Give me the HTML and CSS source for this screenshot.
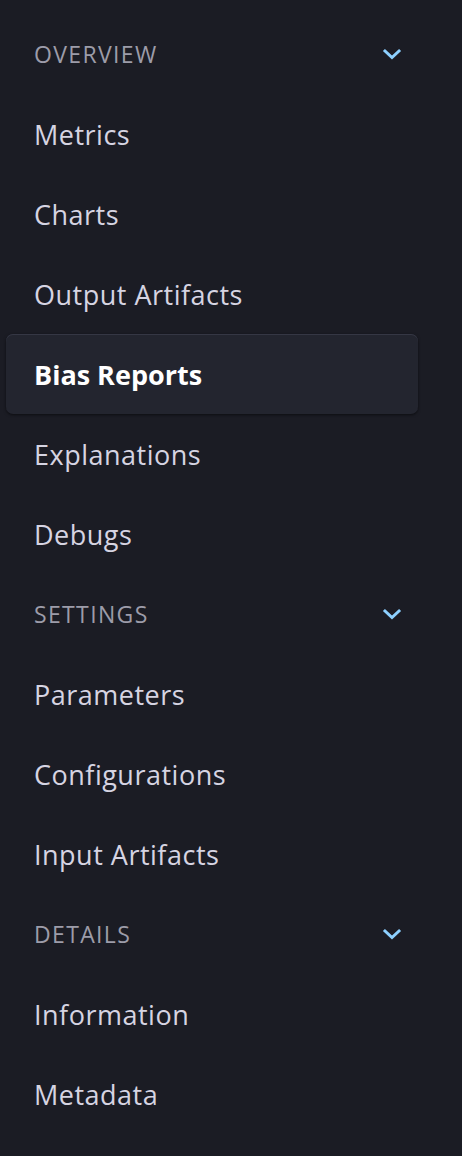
FILE: index.html
```html
<!DOCTYPE html>
<html>
<head>
<meta charset="utf-8">
<link rel="stylesheet" href="styles.css">
</head>
<body>
<nav class="side">
  <div class="section">
    <div class="head"><span>OVERVIEW</span><svg class="chev" width="20" height="12" viewBox="0 0 20 12"><path d="M3 3 L10 9.5 L17 3" fill="none" stroke="#8dd0ff" stroke-width="3" stroke-linecap="square"/></svg></div>
    <a class="item">Metrics</a>
    <a class="item">Charts</a>
    <a class="item">Output Artifacts</a>
    <a class="item active">Bias Reports</a>
    <a class="item">Explanations</a>
    <a class="item">Debugs</a>
  </div>
  <div class="section">
    <div class="head"><span>SETTINGS</span><svg class="chev" width="20" height="12" viewBox="0 0 20 12"><path d="M3 3 L10 9.5 L17 3" fill="none" stroke="#8dd0ff" stroke-width="3" stroke-linecap="square"/></svg></div>
    <a class="item">Parameters</a>
    <a class="item">Configurations</a>
    <a class="item">Input Artifacts</a>
  </div>
  <div class="section">
    <div class="head"><span>DETAILS</span><svg class="chev" width="20" height="12" viewBox="0 0 20 12"><path d="M3 3 L10 9.5 L17 3" fill="none" stroke="#8dd0ff" stroke-width="3" stroke-linecap="square"/></svg></div>
    <a class="item">Information</a>
    <a class="item">Metadata</a>
  </div>
</nav>
</body>
</html>
```

FILE: styles.css
```css
html, body {
  margin: 0;
  padding: 0;
  background: #1b1c24;
}
body {
  font-family: "Open Sans", "Noto Sans", sans-serif;
  height: 1156px;
  overflow: hidden;
}
.side {
  padding: 14px 0 0 6px;
  width: 412px;
}
.head {
  height: 80px;
  display: flex;
  align-items: center;
  justify-content: space-between;
  padding: 0 16px 0 28px;
  color: #9d9ca9;
  font-size: 23px;
  letter-spacing: 1.35px;
  box-sizing: border-box;
}
.item {
  display: flex;
  align-items: center;
  height: 80px;
  padding-left: 28px;
  color: #d6d4e2;
  font-size: 27px;
  letter-spacing: 0.5px;
  box-sizing: border-box;
}
.item.active {
  background: #23252f;
  border-radius: 7px;
  color: #ffffff;
  font-weight: 700;
  letter-spacing: 0;
  box-shadow: 0 1px 3px rgba(0,0,0,0.55), inset 0 1px 0 #353744;
}
```
